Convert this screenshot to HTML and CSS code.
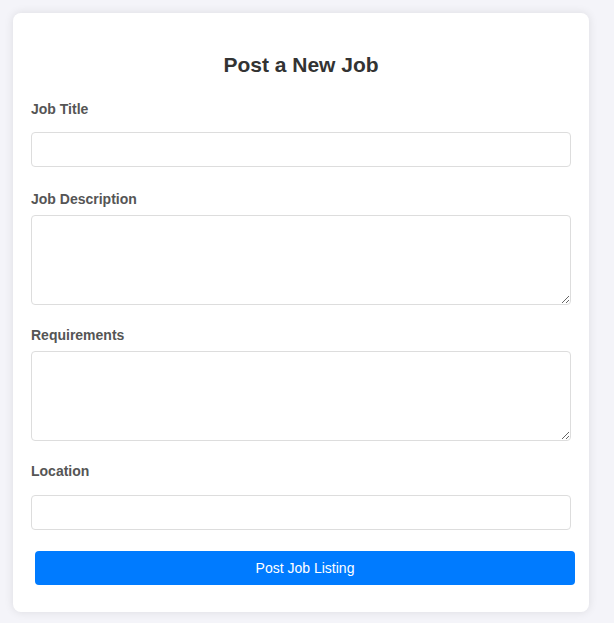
FILE: index.html
```html
<!DOCTYPE html>
<html lang="en">
<head>
<meta charset="UTF-8">
<title>Post a New Job</title>
<link rel="stylesheet" href="styles.css">
</head>
<body>
  <form class="card">
    <h2 class="title">Post a New Job</h2>
    <label class="label" for="title">Job Title</label>
    <input class="field field-input" id="title" type="text">
    <label class="label label-gap" for="desc">Job Description</label>
    <textarea class="field field-area" id="desc"></textarea>
    <label class="label label-gap-sm" for="req">Requirements</label>
    <textarea class="field field-area" id="req"></textarea>
    <label class="label label-gap-sm" for="loc">Location</label>
    <input class="field field-input field-loc" id="loc" type="text">
    <button class="submit" type="submit">Post Job Listing</button>
  </form>
</body>
</html>
```
FILE: styles.css
```css
html, body {
  margin: 0;
  padding: 0;
}
body {
  background: #f4f4f9;
  font-family: "Liberation Sans", Arial, sans-serif;
  font-size: 14px;
  padding: 13px;
  min-height: 623px;
  box-sizing: border-box;
}
.card {
  width: 576px;
  box-sizing: border-box;
  background: #ffffff;
  border-radius: 8px;
  box-shadow: 0 0 10px rgba(0, 0, 0, 0.1);
  padding: 18px 18px 27px;
  display: flex;
  flex-direction: column;
  align-items: flex-start;
}
.title {
  align-self: stretch;
  text-align: center;
  margin: 22px 0 24px;
  font-size: 21px;
  line-height: 24px;
  font-weight: bold;
  color: #333333;
}
.label {
  display: block;
  font-weight: bold;
  font-size: 14px;
  line-height: 16px;
  color: #555555;
}
.label-gap {
  margin-top: 24px;
}
.label-gap-sm {
  margin-top: 22px;
}
.field {
  width: 540px;
  box-sizing: border-box;
  border: 1px solid #dddddd;
  border-radius: 4px;
  background: #ffffff;
  font-family: "Liberation Sans", Arial, sans-serif;
  font-size: 14px;
  padding: 8px;
  margin: 0;
  outline: none;
}
.field-input {
  height: 35px;
  margin-top: 15px;
}
.field-loc {
  margin-top: 16px;
}
.field-area {
  height: 90px;
  margin-top: 8px;
  resize: vertical;
  display: block;
}
.submit {
  width: 540px;
  height: 34px;
  margin: 21px 0 0 4px;
  border: none;
  border-radius: 4px;
  background: #007bff;
  color: #ffffff;
  font-family: "Liberation Sans", Arial, sans-serif;
  font-size: 14px;
  cursor: pointer;
}
```
